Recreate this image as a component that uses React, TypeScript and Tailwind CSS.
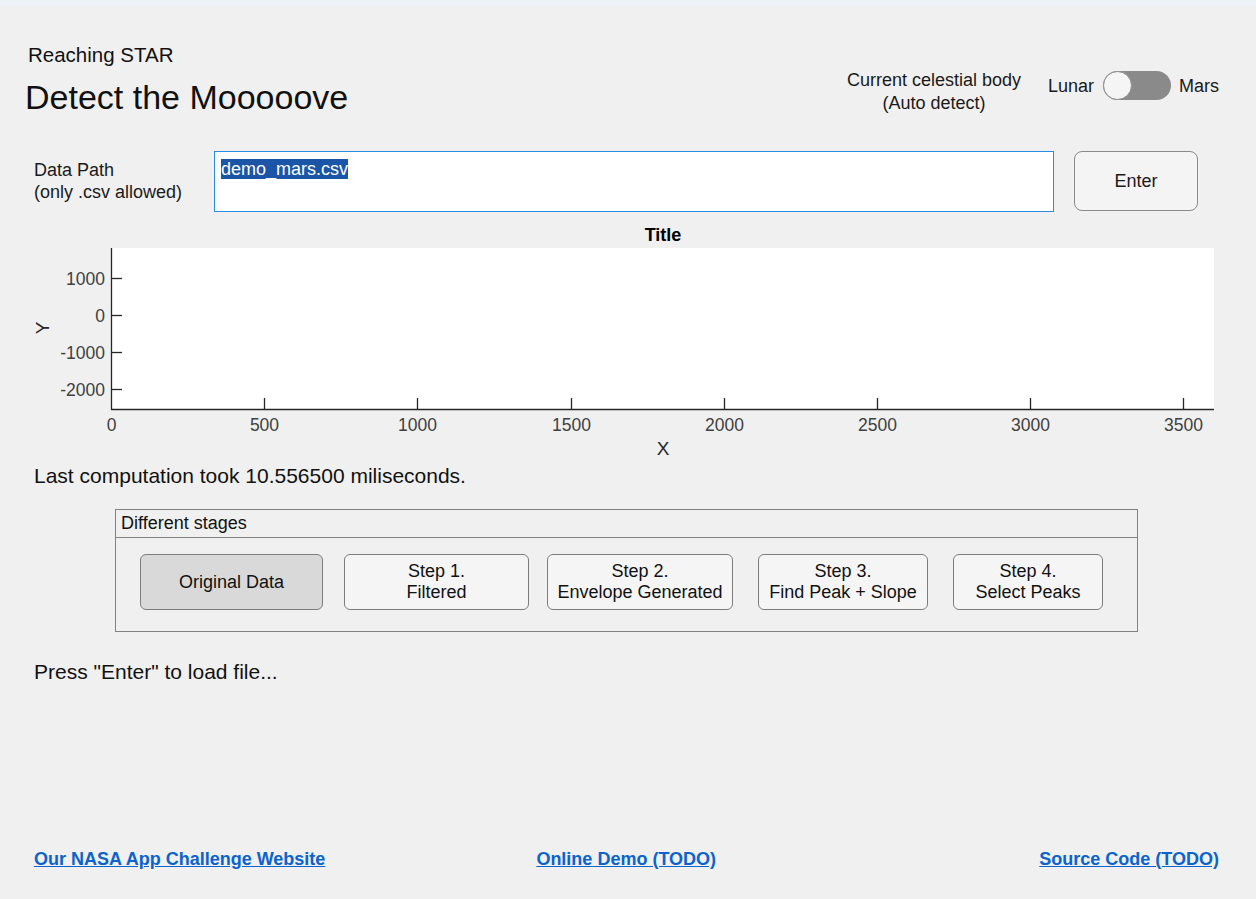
import React from "react";

const xTicks = [0, 500, 1000, 1500, 2000, 2500, 3000, 3500];
const yTicks: [string, number][] = [
  ["1000", 56],
  ["0", 93],
  ["-1000", 130],
  ["-2000", 167],
];

function Chart() {
  const x0 = 111;
  const scale = 153.2 / 500;
  return (
    <svg width={1256} height={240} className="block shrink-0" style={{ fontFamily: '"Liberation Sans", Arial, sans-serif' }}>
      <text x={663} y={18.5} textAnchor="middle" fontSize={18} fontWeight={700} fill="#000">
        Title
      </text>
      <rect x={111} y={26} width={1103} height={161} fill="#ffffff" />
      <line x1={111.5} y1={26} x2={111.5} y2={187.5} stroke="#262626" strokeWidth={1.3} />
      <line x1={111} y1={187.5} x2={1214} y2={187.5} stroke="#262626" strokeWidth={1.3} />
      {yTicks.map(([label, y]) => (
        <g key={label}>
          <line x1={111} y1={y + 0.5} x2={122} y2={y + 0.5} stroke="#262626" strokeWidth={1.3} />
          <text x={105} y={y + 6.5} textAnchor="end" fontSize={17.5} fill="#404040">
            {label}
          </text>
        </g>
      ))}
      {xTicks.map((v) => {
        const x = Math.round(x0 + v * scale) + 0.5;
        return (
          <g key={v}>
            {v !== 0 && <line x1={x} y1={176} x2={x} y2={187} stroke="#262626" strokeWidth={1.3} />}
            <text x={x} y={209} textAnchor="middle" fontSize={17.5} fill="#404040">
              {v}
            </text>
          </g>
        );
      })}
      <text x={663} y={232.5} textAnchor="middle" fontSize={19} fill="#262626">
        X
      </text>
      <text
        x={0}
        y={0}
        textAnchor="middle"
        fontSize={19}
        fill="#262626"
        transform="translate(49 106) rotate(-90)"
      >
        Y
      </text>
    </svg>
  );
}

function StageButton({
  lines,
  width,
  ml,
  pressed,
}: {
  lines: string[];
  width: string;
  ml: string;
  pressed?: boolean;
}) {
  return (
    <div
      className={`${width} ${ml} h-[56px] shrink-0 rounded-[6px] border border-[#7d7d7d] flex flex-col items-center justify-center text-[18px] leading-[21px] text-[#111] ${
        pressed ? "bg-[#d9d9d9]" : "bg-[#f5f5f5]"
      }`}
    >
      {lines.map((l) => (
        <span key={l}>{l}</span>
      ))}
    </div>
  );
}

export default function App() {
  return (
    <div
      className="w-[1256px] h-[899px] bg-[#f0f0f0] flex flex-col text-[#000] overflow-hidden"
      style={{ fontFamily: '"Liberation Sans", Arial, sans-serif' }}
    >
      <div className="h-[6px] bg-[#eef2f9] shrink-0" />

      {/* Header */}
      <div className="flex justify-between items-start shrink-0">
        <div className="flex flex-col mt-[37px]">
          <div className="ml-[28px] text-[20.5px] leading-[24px] text-[#111]">Reaching STAR</div>
          <div className="ml-[25px] mt-[10px] text-[34px] leading-[40px] text-[#111]">Detect the Mooooove</div>
        </div>
        <div className="flex items-start mt-[63px] mr-[37px]">
          <div className="w-[174px] text-center text-[18px] leading-[23px] text-[#1a1a1a]">
            <div className="whitespace-nowrap">Current celestial body</div>
            <div>(Auto detect)</div>
          </div>
          <div className="flex items-center ml-[27px] mt-[2px] h-[29px]">
            <span className="text-[18px] leading-[22px] text-[#1a1a1a]">Lunar</span>
            <div className="ml-[9px] w-[68px] h-[29px] rounded-full bg-[#8a8a8a] flex items-center">
              <div className="w-[29px] h-[29px] rounded-full bg-[#f5f5f5] border border-[#8c8c8c]" />
            </div>
            <span className="ml-[8px] text-[18px] leading-[22px] text-[#1a1a1a]">Mars</span>
          </div>
        </div>
      </div>

      {/* Data path row */}
      <div className="flex items-start mt-[34px] shrink-0">
        <div className="ml-[34px] w-[180px] mt-[8px] text-[18px] leading-[22px] text-[#1a1a1a]">
          <div>Data Path</div>
          <div>(only .csv allowed)</div>
        </div>
        <div className="w-[840px] h-[61px] bg-white border border-[#2a8be0] pl-[6px] pt-[6px]">
          <span className="inline-block bg-[#1a55a8] text-white text-[18px] leading-[20px]">demo_mars.csv</span>
        </div>
        <button className="ml-[20px] w-[124px] h-[60px] rounded-[8px] border border-[#8a8a8a] bg-[#f4f4f4] text-[18px] text-[#1a1a1a]">
          Enter
        </button>
      </div>

      <div className="mt-[10px] shrink-0">
        <Chart />
      </div>

      <div className="ml-[34px] mt-[2px] text-[21px] leading-[24px] text-[#111]">
        Last computation took 10.556500 miliseconds.
      </div>

      {/* Stages panel */}
      <div className="ml-[115px] mt-[21px] w-[1023px] border border-[#828282] shrink-0">
        <div className="h-[28px] border-b border-[#828282] pl-[5px] flex items-center text-[18px] text-[#111]">
          Different stages
        </div>
        <div className="flex pt-[16px] pb-[21px]">
          <StageButton lines={["Original Data"]} width="w-[183px]" ml="ml-[24px]" pressed />
          <StageButton lines={["Step 1.", "Filtered"]} width="w-[185px]" ml="ml-[21px]" />
          <StageButton lines={["Step 2.", "Envelope Generated"]} width="w-[186px]" ml="ml-[18px]" />
          <StageButton lines={["Step 3.", "Find Peak + Slope"]} width="w-[170px]" ml="ml-[25px]" />
          <StageButton lines={["Step 4.", "Select Peaks"]} width="w-[150px]" ml="ml-[25px]" />
        </div>
      </div>

      <div className="ml-[34px] mt-[28px] text-[21px] leading-[24px] text-[#111]">
        Press "Enter" to load file...
      </div>

      {/* Links */}
      <div className="mt-auto mb-[29px] flex items-center pl-[34px] pr-[37px] text-[18px] leading-[22px] font-bold">
        <a href="#" className="text-[#0b63ce] underline">
          Our NASA App Challenge Website
        </a>
        <a href="#" className="ml-[211px] text-[#0b63ce] underline">
          Online Demo (TODO)
        </a>
        <a href="#" className="ml-auto text-[#0b63ce] underline">
          Source Code (TODO)
        </a>
      </div>
    </div>
  );
}
